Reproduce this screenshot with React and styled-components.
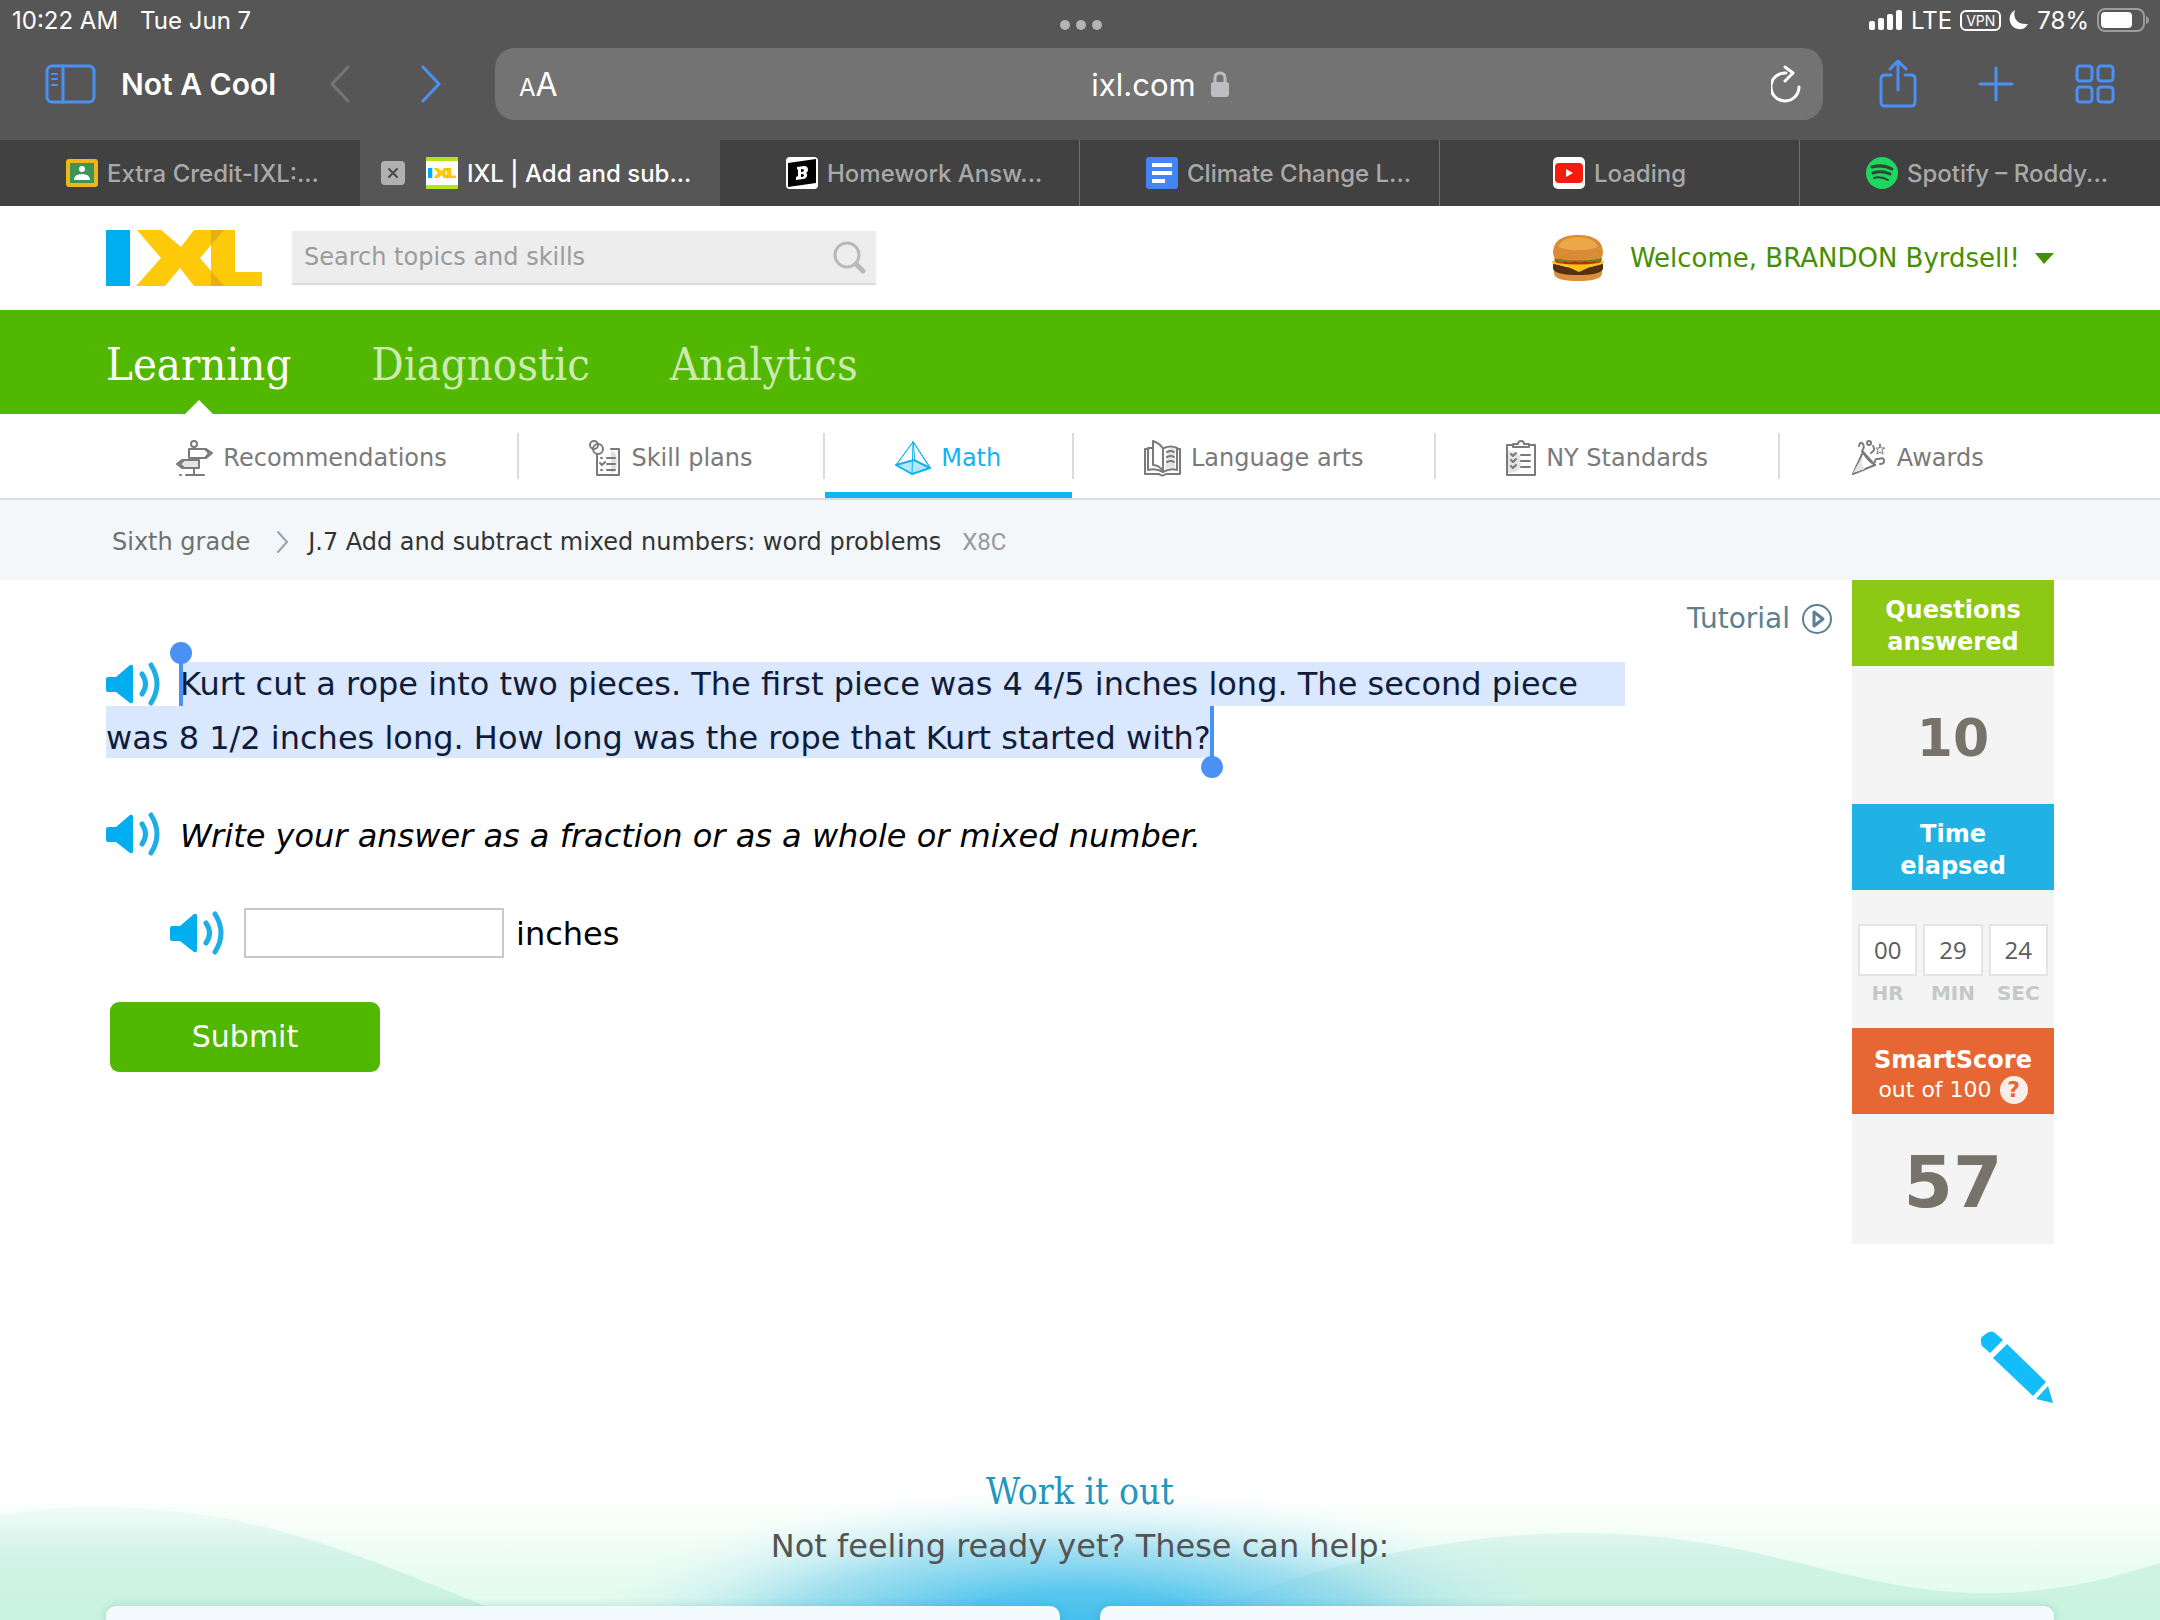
import React, { useState } from "react";
import styled, { createGlobalStyle } from "styled-components";

const GlobalStyle = createGlobalStyle`
  *, *::before, *::after {
    box-sizing: border-box;
  }
  body {
    margin: 0;
    background: #fff;
    font-family: "DejaVu Sans", Verdana, sans-serif;
    color: #000;
  }
  button, input {
    font: inherit;
    color: inherit;
  }
  button {
    border: none;
    background: none;
    padding: 0;
    cursor: pointer;
  }
  a {
    color: inherit;
    text-decoration: none;
  }
  svg {
    display: block;
    flex-shrink: 0;
  }
  h2, p, ul {
    margin: 0;
    padding: 0;
  }
`;

const Page = styled.div`
  display: flex;
  flex-direction: column;
  height: 100vh;
  overflow: hidden;
  > * {
    flex-shrink: 0;
  }
`;

/* browser */

const Browser = styled.header`
  background: #565656;
  color: #fff;
  font-family: Inter, sans-serif;
`;

const StatusBar = styled.div`
  display: grid;
  grid-template-columns: 1fr auto 1fr;
  align-items: center;
  height: 40px;
  padding: 0 10px 0 12px;
  font-size: 24px;
`;

const StatusGroup = styled.div`
  display: flex;
  align-items: center;
  gap: ${(props) => props.$gap}px;
  justify-content: ${(props) => (props.$end ? "flex-end" : "flex-start")};
`;

const Vpn = styled.span`
  border: 2px solid #fff;
  border-radius: 6px;
  padding: 0 4px;
  font-size: 14px;
  line-height: 17px;
`;

const Dots = styled.button`
  display: flex;
  gap: 6px;
  padding-top: 10px;
  span {
    width: 10px;
    height: 10px;
    border-radius: 50%;
    background: #b4b4b4;
  }
`;

const Toolbar = styled.div`
  display: flex;
  align-items: center;
  height: 100px;
  padding: 0 45px 12px;
`;

const ToolButtons = styled.div`
  display: flex;
  align-items: center;
  justify-content: space-between;
  color: #4a90f5;
  width: ${(props) => props.$width}px;
`;

const History = styled.div`
  display: flex;
  gap: 69px;
`;

const ProfileName = styled.button`
  margin: 0 auto 0 25px;
  color: #fff;
  font-size: 30px;
  font-weight: 600;
  white-space: nowrap;
`;

const AddressBar = styled.div`
  flex: 1;
  display: grid;
  grid-template-columns: 1fr auto 1fr;
  align-items: center;
  height: 72px;
  margin: 0 56px 0 53px;
  padding: 0 22px 0 24px;
  border-radius: 20px;
  background: #737373;
  font-size: 31px;
`;

const TextSize = styled.button`
  justify-self: start;
  font-size: 32px;
  small {
    font-size: 24px;
  }
`;

const Address = styled.div`
  display: flex;
  align-items: center;
  gap: 15px;
`;

const Reload = styled.button`
  justify-self: end;
`;

const TabBar = styled.nav`
  display: grid;
  grid-template-columns: repeat(6, 1fr);
  height: 66px;
  background: #414141;
  font-size: 24px;
  font-weight: 500;
`;

const Tab = styled.div`
  display: flex;
  align-items: center;
  justify-content: ${(props) => (props.$centered ? "center" : "flex-start")};
  padding-left: ${(props) => (props.$centered ? 0 : props.$active ? 21 : 66)}px;
  background: ${(props) => (props.$active ? "#565656" : "transparent")};
  color: ${(props) => (props.$active ? "#fff" : "#a9a9a9")};
  border-right: ${(props) => (props.$line ? "1px solid #707070" : "none")};
  a {
    display: flex;
    align-items: center;
    gap: 9px;
    white-space: nowrap;
  }
`;

const CloseTab = styled.button`
  margin-right: 21px;
`;

/* site header */

const SiteHeader = styled.div`
  display: flex;
  align-items: center;
  height: 104px;
  padding: 0 106px;
`;

const Search = styled.form`
  display: flex;
  align-items: center;
  width: 584px;
  height: 54px;
  margin-left: 30px;
  padding: 0 10px 0 12px;
  background: #ededed;
  border-bottom: 2px solid #dadada;
  input {
    flex: 1;
    min-width: 0;
    border: none;
    outline: none;
    background: none;
    padding: 0;
    font-size: 24px;
  }
  input::placeholder {
    color: #9b9b9b;
    opacity: 1;
  }
`;

const Account = styled.button`
  display: flex;
  align-items: center;
  gap: 15px;
  margin-left: auto;
  color: #468f00;
  font-size: 26px;
  svg:first-child {
    margin-right: 11px;
  }
`;

const MainNav = styled.nav`
  display: flex;
  align-items: center;
  gap: 80px;
  height: 104px;
  padding: 0 106px;
  background: #52b700;
`;

const MainLink = styled.a`
  position: relative;
  display: flex;
  align-items: center;
  height: 100%;
  padding-top: 4px;
  font-family: "Roboto Slab", "DejaVu Serif Condensed", "DejaVu Serif", serif;
  font-size: 45px;
  font-weight: 300;
  color: ${(props) => (props.$active ? "#fff" : "#cdebb0")};
  &::after {
    content: "";
    display: ${(props) => (props.$active ? "block" : "none")};
    position: absolute;
    bottom: 0;
    left: 50%;
    margin-left: -14px;
    border: 14px solid transparent;
    border-top: none;
    border-bottom-color: #fff;
  }
`;

const SubNav = styled.nav`
  display: flex;
  align-items: center;
  height: 86px;
  padding: 0 106px;
  border-bottom: 2px solid #dcdcdc;
`;

const SubLink = styled.a`
  flex: 1 0 auto;
  display: flex;
  align-items: center;
  justify-content: center;
  gap: 10px;
  height: 84px;
  padding-top: 10px;
  font-size: 24px;
  color: ${(props) => (props.$active ? "#0fb4f0" : "#7a7a7a")};
  border-bottom: 6px solid
    ${(props) => (props.$active ? "#0fb4f0" : "transparent")};
`;

const Divider = styled.span`
  width: 2px;
  height: 46px;
  background: #dcdcdc;
`;

const Breadcrumb = styled.nav`
  display: flex;
  align-items: center;
  height: 80px;
  padding: 4px 112px 0;
  background: #f3f7fa;
  font-size: 24px;
  color: #333;
  a {
    color: #707070;
  }
  svg {
    margin: 0 19px 0 26px;
  }
`;

const SkillCode = styled.span`
  margin-left: 21px;
  font-family: Roboto, sans-serif;
  color: #999;
`;

/* practice */

const Practice = styled.main`
  display: flex;
  align-items: flex-start;
  padding: 0 106px;
`;

const Question = styled.section`
  flex: 1;
  padding: 82px 62px 0 0;
  font-size: 32px;
  line-height: 44px;
`;

const Passage = styled.div`
  display: flex;
  flex-direction: column;
  align-items: flex-start;
  margin-bottom: 52px;
  color: #101c38;
  white-space: nowrap;
`;

const Line = styled.div`
  display: flex;
  align-items: center;
  gap: 20px;
  margin-left: ${(props) => (props.$indent ? 64 : 0)}px;
`;

const FirstLine = styled(Line)`
  align-self: stretch;
`;

const Highlight = styled.span`
  position: relative;
  flex: 1;
  background: #d9e7ff;
  line-height: ${(props) => (props.$last ? 40 : 44)}px;
  padding-top: ${(props) => (props.$last ? 12 : 0)}px;
`;

/* selection grips sit over the highlighted text */
const Grip = styled.i`
  position: absolute;
  top: 0;
  bottom: 0;
  width: 4px;
  background: #4a90f5;
  ${(props) => (props.$end ? "right: -3px;" : "left: -1px;")}
  &::after {
    content: "";
    position: absolute;
    left: -9px;
    ${(props) => (props.$end ? "bottom: -20px;" : "top: -20px;")}
    width: 22px;
    height: 22px;
    border-radius: 50%;
    background: #4a90f5;
  }
`;

const Instruction = styled.em`
  padding-top: 4px;
  font-style: italic;
`;

const AnswerForm = styled.form`
  margin-top: 50px;
`;

const AnswerInput = styled.input`
  width: 260px;
  height: 50px;
  border: 2px solid #c8c8c8;
  background: #fff;
  padding: 0 10px;
  outline: none;
`;

const Unit = styled.label`
  margin-left: -8px;
  padding-top: 2px;
`;

const Submit = styled.button`
  display: block;
  width: 270px;
  height: 70px;
  margin: 44px 0 0 4px;
  border-radius: 9px;
  background: #52b700;
  color: #fff;
  font-size: 30px;
`;

const Side = styled.aside`
  display: flex;
  align-items: flex-start;
  gap: 20px;
`;

const Tutorial = styled.a`
  display: flex;
  align-items: center;
  gap: 12px;
  margin-top: 22px;
  color: #5b8190;
  font-size: 28px;
`;

const Score = styled.div`
  width: 202px;
  background: #f4f4f4;
  text-align: center;
`;

const ScoreHead = styled.div`
  display: flex;
  flex-direction: column;
  align-items: center;
  justify-content: center;
  height: 86px;
  background: ${(props) => props.$color};
  color: #fff;
  font-size: 24px;
  font-weight: 700;
  line-height: 32px;
  padding-top: 6px;
`;

const OutOf = styled.span`
  display: flex;
  align-items: center;
  gap: 8px;
  height: 28px;
  font-size: 22px;
  font-weight: 400;
`;

const ScoreValue = styled.div`
  display: flex;
  align-items: center;
  justify-content: center;
  height: ${(props) => props.$height}px;
  padding-top: 6px;
  color: #77736a;
  font-size: ${(props) => props.$size}px;
  font-weight: 700;
`;

const Timer = styled.div`
  display: grid;
  grid-template-columns: repeat(3, 1fr);
  gap: 6px;
  height: 138px;
  padding: 34px 6px 0;
  color: #c3c9c5;
  font-size: 20px;
  font-weight: 700;
`;

const TimerBox = styled.div`
  height: 52px;
  margin-bottom: 5px;
  border: 2px solid #e4e4e4;
  background: #fff;
  color: #5c5c5c;
  font-family: "Open Sans", sans-serif;
  font-size: 24px;
  font-weight: 400;
  line-height: 47px;
`;

const PencilRow = styled.div`
  display: flex;
  justify-content: flex-end;
  padding: 87px 106px 0;
`;

/* help */

const Help = styled.section`
  position: relative;
  flex: 1 1 0;
  min-height: 0;
  margin-top: 15px;
  padding: 50px 106px 0;
  text-align: center;
`;

const HelpBackground = styled.svg`
  position: absolute;
  inset: 0;
  width: 100%;
  height: 100%;
  z-index: -1;
`;

const HelpTitle = styled.h2`
  font-family: "Roboto Slab", "DejaVu Serif Condensed", "DejaVu Serif", serif;
  font-size: 37px;
  font-weight: 400;
  line-height: 44px;
  color: #2496bd;
`;

const HelpText = styled.p`
  margin: 10px 0 38px;
  font-size: 32px;
  line-height: 44px;
  color: #545454;
`;

const Cards = styled.div`
  display: grid;
  grid-template-columns: 1fr 1fr;
  gap: 40px;
`;

const Card = styled.div`
  height: 200px;
  border-radius: 10px;
  background: #f3fbff;
  box-shadow: 0 0 8px rgba(40, 110, 130, 0.2);
`;

/* icons */

const Icon = ({ w, h, sw = 3, children, ...rest }) => (
  <svg
    width={w}
    height={h}
    viewBox={`0 0 ${w} ${h}`}
    fill="none"
    stroke="currentColor"
    strokeWidth={sw}
    strokeLinecap="round"
    strokeLinejoin="round"
    aria-hidden="true"
    {...rest}
  >
    {children}
  </svg>
);

const SignalIcon = () => (
  <Icon w={34} h={20} stroke="none" fill="#fff">
    <rect x="0" y="11" width="6" height="9" rx="2" />
    <rect x="9" y="8" width="6" height="12" rx="2" />
    <rect x="18" y="4" width="6" height="16" rx="2" />
    <rect x="27" y="0" width="6" height="20" rx="2" />
  </Icon>
);

const MoonIcon = () => (
  <Icon w={20} h={20} stroke="none" fill="#fff">
    <path d="M6 0C4 6 6 15 19 14C16 19 12 20 9 19C-1 17 -2 4 6 0Z" />
  </Icon>
);

const BatteryIcon = () => (
  <Icon w={53} h={24} stroke="none">
    <rect
      x="1"
      y="1"
      width="46"
      height="22"
      rx="7"
      stroke="#9c9c9c"
      strokeWidth="2"
    />
    <rect x="4" y="4" width="31" height="16" rx="4" fill="#fff" />
    <path d="M49 8Q52 9 52 12Q52 15 49 16Z" fill="#9c9c9c" />
  </Icon>
);

const SidebarIcon = () => (
  <Icon w={51} h={40}>
    <rect x="2" y="2" width="47" height="36" rx="5" />
    <path d="M18 2V38" />
    <path d="M7 10H12M7 15H12M7 21H12" strokeWidth="2" />
  </Icon>
);

const BackIcon = () => (
  <Icon w={22} h={38} stroke="#757575">
    <path d="M19 2L3 19L19 36" />
  </Icon>
);

const ForwardIcon = () => (
  <Icon w={22} h={38}>
    <path d="M3 2L19 19L3 36" />
  </Icon>
);

const LockIcon = () => (
  <Icon w={18} h={26} stroke="#bdbdc3">
    <rect x="0" y="11" width="18" height="15" rx="3" fill="#bdbdc3" stroke="none" />
    <path d="M4 12V7Q4 2 9 2Q14 2 14 7V12" />
  </Icon>
);

const ReloadIcon = () => (
  <Icon w={30} h={38}>
    <path d="M15 8A14 14 0 1 0 28 22" />
    <path d="M14 2L22 8L14 16" />
  </Icon>
);

const ShareIcon = () => (
  <Icon w={38} h={48}>
    <path d="M12 15H6Q2 15 2 19V42Q2 46 6 46H32Q36 46 36 42V19Q36 15 32 15H26" />
    <path d="M19 30V2M11 9L19 1L27 9" />
  </Icon>
);

const PlusIcon = () => (
  <Icon w={36} h={36}>
    <path d="M18 2V34M2 18H34" />
  </Icon>
);

const GridIcon = () => (
  <Icon w={40} h={40}>
    <rect x="2" y="2" width="15" height="15" rx="3" />
    <rect x="23" y="2" width="15" height="15" rx="3" />
    <rect x="2" y="23" width="15" height="15" rx="3" />
    <rect x="23" y="23" width="15" height="15" rx="3" />
  </Icon>
);

const CloseIcon = () => (
  <Icon w={24} h={24} stroke="#4a4a4a" sw={2}>
    <rect width="24" height="24" rx="4" fill="#b0b0b0" stroke="none" />
    <path d="M8 8L16 16M16 8L8 16" />
  </Icon>
);

const ClassroomIcon = () => (
  <Icon w={32} h={32} stroke="none">
    <rect y="2" width="32" height="28" rx="3" fill="#f0b41c" />
    <rect x="4" y="6" width="24" height="20" fill="#3d9456" />
    <circle cx="16" cy="12" r="3" fill="#fff" />
    <path d="M8 23Q8 17 16 17Q24 17 24 23Z" fill="#fff" />
  </Icon>
);

const LogoShapes = () => (
  <>
    <rect width="24" height="56" fill="#00aeef" />
    <path
      d="M31 0H55L75 17L88 0H118L94 28L118 56H88L74 38L59 56H30L55 28Z"
      fill="#fdc908"
    />
    <path d="M105 0H129V42H156V56H105Z" fill="#fdc908" />
    <path d="M105 0H118L105 15ZM105 41L118 56H105Z" fill="#e2b116" />
  </>
);

const IxlIcon = () => (
  <Icon w={32} h={32} stroke="none">
    <rect width="32" height="32" fill="#fff" />
    <path d="M0 0H32V4H0ZM0 28H32V32H0Z" fill="#b3e516" />
    <svg x="2" y="10" width="28" height="12" viewBox="0 0 156 56">
      <LogoShapes />
    </svg>
  </Icon>
);

const BrainlyIcon = () => (
  <Icon w={32} h={32} stroke="none">
    <rect width="32" height="32" rx="4" fill="#fff" />
    <path d="M2 6L30 2V26L2 30Z" fill="#000" />
    <path
      d="M11 10L18 9Q22 9 22 13Q22 15 20 16Q22 17 21 19Q20 22 17 22L10 23V20L12 19V13L11 12ZM15 12V15Q18 15 18 13Q18 12 15 12ZM15 17V20Q18 20 18 18Q18 17 15 17Z"
      fill="#fff"
      fillRule="evenodd"
    />
  </Icon>
);

const DocsIcon = () => (
  <Icon w={32} h={32} stroke="none">
    <rect width="32" height="32" rx="3" fill="#4285f4" />
    <path d="M6 6H26V10H6ZM6 14H26V18H6ZM6 22H19V26H6Z" fill="#fff" />
  </Icon>
);

const YoutubeIcon = () => (
  <Icon w={32} h={32} stroke="none">
    <rect width="32" height="32" rx="5" fill="#fff" />
    <rect x="2" y="6" width="28" height="20" rx="4" fill="#f61c0d" />
    <path d="M13 12L20 16L13 20Z" fill="#fff" />
  </Icon>
);

const SpotifyIcon = () => (
  <Icon w={32} h={32} stroke="#2f4636">
    <circle cx="16" cy="16" r="16" fill="#1ed760" stroke="none" />
    <path d="M6 10Q17 7 26 12" />
    <path d="M7 16Q16 13 24 17" strokeWidth="3" />
    <path d="M8 21Q15 19 22 23" strokeWidth="2" />
  </Icon>
);

const Logo = () => (
  <svg width="156" height="56" viewBox="0 0 156 56" role="img" aria-label="IXL">
    <LogoShapes />
  </svg>
);

const SearchIcon = () => (
  <Icon w={34} h={34} stroke="#b9b9b9">
    <circle cx="15" cy="15" r="12" />
    <path d="M24 24L31 31" strokeWidth="5" />
  </Icon>
);

const BurgerIcon = () => (
  <Icon w={52} h={48} stroke="none">
    <path
      d="M2 35Q14 41 26 41Q40 41 50 35V39Q50 47 26 47Q2 47 2 39Z"
      fill="#dc9036"
    />
    <path d="M1 29Q14 34 26 34Q40 34 51 29V35Q48 41 26 41Q4 41 1 35Z" fill="#55300f" />
    <path d="M0 27Q26 24 52 27L51 30L38 33L27 38L14 32L1 30Z" fill="#fdbf1a" />
    <path d="M3 23H49Q51 28 46 29Q26 32 6 29Q1 28 3 23Z" fill="#b52d17" />
    <path
      d="M4 25Q9 29 13 26Q18 29 23 26Q28 29 33 26Q38 29 42 26Q46 28 49 25"
      stroke="#5f8f24"
      strokeWidth="2"
    />
    <path d="M1 18Q2 1 26 1Q50 1 51 18Q51 25 46 25Q26 28 6 25Q1 25 1 18Z" fill="#d98c35" />
    <path d="M6 13Q10 3 26 3Q42 3 46 13Q36 17 26 16Q16 17 6 13Z" fill="#eba748" />
  </Icon>
);

const ArrowIcon = () => (
  <Icon w={19} h={11} stroke="none" fill="#468f00">
    <path d="M0 0H19L9 11Z" />
  </Icon>
);

const SignpostIcon = () => (
  <Icon w={37} h={36} sw={2}>
    <circle cx="18" cy="4" r="3" />
    <path d="M18 7V9M18 18V20M18 28V34M10 35H28M4 35H5" />
    <path d="M13 9H30L36 13L30 18H13Z" />
    <path d="M29 9L33 13L29 18" />
    <path d="M23 20H6L1 24L6 28H23Z" fill="#e4e4e4" />
    <path d="M8 20L4 24L8 28" />
  </Icon>
);

const PlansIcon = () => (
  <Icon w={32} h={36} sw={2}>
    <path d="M22 9H30V35H8V14" />
    <path d="M22 11Q28 11 28 22Q28 33 22 33Z" fill="#e0e0e0" stroke="none" />
    <circle cx="5" cy="5" r="4" />
    <circle cx="9" cy="9" r="5" />
    <path d="M18 18H26M18 24H26M18 30H26M12 18H13M11 23L13 25L16 22M12 30H13" />
  </Icon>
);

const PyramidIcon = () => (
  <Icon w={36} h={36} sw={2}>
    <path d="M1 25L19 20L35 28L17 34Z" fill="#b4e7fa" />
    <path d="M18 2L1 25M18 2L35 28M18 2L17 34" strokeWidth="1" />
    <path d="M18 2L1 25L17 34L35 28Z" strokeWidth="1" />
    <path d="M18 2L20 20" strokeWidth="1" />
  </Icon>
);

const BookIcon = () => (
  <Icon w={37} h={37} sw={2}>
    <path d="M20 8Q27 5 33 8V30Q26 28 19 32Q12 28 4 30V8H8" />
    <path d="M9 1V25Q16 25 19 32V9Q17 4 9 1Z" fill="#fff" />
    <path d="M24 9Q30 7 31 9V28Q26 27 21 29Z" fill="#e4e4e4" stroke="none" />
    <path d="M4 9H1V34H15Q18 37 22 34H36V9H33" />
    <path d="M23 12Q27 10 30 12M23 17Q27 15 30 17M23 22Q27 20 30 22" />
  </Icon>
);

const ClipboardIcon = () => (
  <Icon w={30} h={36} sw={2}>
    <path d="M7 5H1V35H29V5H23" />
    <path d="M2 11Q15 11 15 22Q15 33 2 33Z" fill="#e4e4e4" stroke="none" />
    <path d="M7 7V4H12Q12 1 15 1Q18 1 18 4H23V7Z" />
    <path d="M15 15H24M15 21H24M15 27H24" />
    <path d="M5 14L7 16L10 13M5 20L7 22L10 19M5 26L7 28L10 25" />
  </Icon>
);

const PartyIcon = () => (
  <Icon w={36} h={36} sw={2}>
    <path d="M12 12L24 25L2 34Z" />
    <path d="M11 17L2 33L14 29Q10 25 11 17Z" fill="#e4e4e4" stroke="none" />
    <path d="M12 12Q16 20 24 25" />
    <path d="M8 6Q9 1 12 4Q14 7 11 11" />
    <circle cx="18" cy="3" r="2" />
    <path d="M20 13Q25 10 22 6" />
    <path d="M29 4L30 8L34 8L31 10L32 14L29 12L26 14L27 10L25 8H28Z" strokeWidth="1" />
    <path d="M24 22Q24 18 28 19Q33 17 33 21Q33 24 29 24" />
  </Icon>
);

const SpeakerIcon = () => (
  <Icon w={54} h={44} stroke="#1eaee5">
    <path
      d="M2 15H10L24 3Q27 2 27 5V39Q27 42 24 41L10 30H2Q0 30 0 27V18Q0 15 2 15Z"
      fill="#00aeef"
      stroke="none"
    />
    <path d="M36 12Q43 22 36 32" strokeWidth="5" />
    <path d="M45 3Q57 22 45 41" strokeWidth="5" />
  </Icon>
);

const PlayIcon = () => (
  <Icon w={30} h={30} sw={2}>
    <circle cx="15" cy="15" r="14" />
    <path d="M12 8L21 15L12 22Z" strokeWidth="3" />
  </Icon>
);

const HelpBadge = styled.button`
  width: 28px;
  height: 28px;
  border-radius: 50%;
  background: #fbeeea;
  color: #e66733;
  font-size: 22px;
  font-weight: 700;
  line-height: 28px;
`;

const PencilIcon = () => (
  <Icon w={74} h={74} stroke="none" fill="#12bdfa">
    <path d="M1 10Q0 7 3 5L7 2Q12 -1 15 2L23 9L10 22L2 15Q1 13 1 10Z" />
    <path d="M27 13L66 51L53 65L13 27Z" />
    <path d="M68 55L73 72L56 68Z" />
  </Icon>
);

const tabs = [
  { title: "Extra Credit-IXL:...", icon: <ClassroomIcon /> },
  { title: "IXL | Add and sub...", icon: <IxlIcon />, active: true },
  { title: "Homework Answ...", icon: <BrainlyIcon />, line: true },
  { title: "Climate Change L...", icon: <DocsIcon />, line: true },
  { title: "Loading", icon: <YoutubeIcon />, line: true, centered: true },
  { title: "Spotify – Roddy...", icon: <SpotifyIcon /> },
];

const subjects = [
  { name: "Recommendations", icon: <SignpostIcon /> },
  { name: "Skill plans", icon: <PlansIcon /> },
  { name: "Math", icon: <PyramidIcon />, active: true },
  { name: "Language arts", icon: <BookIcon /> },
  { name: "NY Standards", icon: <ClipboardIcon /> },
  { name: "Awards", icon: <PartyIcon /> },
];

const time = [
  { value: "00", unit: "HR" },
  { value: "29", unit: "MIN" },
  { value: "24", unit: "SEC" },
];

function BrowserChrome() {
  return (
    <Browser>
      <StatusBar>
        <StatusGroup $gap={22}>
          <span>10:22 AM</span>
          <span>Tue Jun 7</span>
        </StatusGroup>
        <Dots aria-label="Multitasking">
          <span />
          <span />
          <span />
        </Dots>
        <StatusGroup $gap={8} $end>
          <SignalIcon />
          <span>LTE</span>
          <Vpn>VPN</Vpn>
          <MoonIcon />
          <span>78%</span>
          <BatteryIcon />
        </StatusGroup>
      </StatusBar>
      <Toolbar>
        <ToolButtons $width={397}>
          <button aria-label="Sidebar">
            <SidebarIcon />
          </button>
          <ProfileName>Not A Cool</ProfileName>
          <History>
            <button aria-label="Back">
              <BackIcon />
            </button>
            <button aria-label="Forward">
              <ForwardIcon />
            </button>
          </History>
        </ToolButtons>
        <AddressBar>
          <TextSize aria-label="Page settings">
            <small>A</small>A
          </TextSize>
          <Address>
            ixl.com <LockIcon />
          </Address>
          <Reload aria-label="Reload">
            <ReloadIcon />
          </Reload>
        </AddressBar>
        <ToolButtons $width={236}>
          <button aria-label="Share">
            <ShareIcon />
          </button>
          <button aria-label="New tab">
            <PlusIcon />
          </button>
          <button aria-label="Tab overview">
            <GridIcon />
          </button>
        </ToolButtons>
      </Toolbar>
      <TabBar>
        {tabs.map((tab) => (
          <Tab
            key={tab.title}
            $active={tab.active}
            $line={tab.line}
            $centered={tab.centered}
          >
            {tab.active && (
              <CloseTab aria-label="Close tab">
                <CloseIcon />
              </CloseTab>
            )}
            <a href="#tab">
              {tab.icon}
              {tab.title}
            </a>
          </Tab>
        ))}
      </TabBar>
    </Browser>
  );
}

function Header() {
  return (
    <>
      <SiteHeader>
        <a href="#home">
          <Logo />
        </a>
        <Search>
          <input
            type="text"
            placeholder="Search topics and skills"
            aria-label="Search topics and skills"
          />
          <button type="button" aria-label="Search">
            <SearchIcon />
          </button>
        </Search>
        <Account>
          <BurgerIcon />
          Welcome, BRANDON Byrdsell!
          <ArrowIcon />
        </Account>
      </SiteHeader>
      <MainNav>
        <MainLink href="#learning" $active>
          Learning
        </MainLink>
        <MainLink href="#diagnostic">Diagnostic</MainLink>
        <MainLink href="#analytics">Analytics</MainLink>
      </MainNav>
      <SubNav>
        {subjects.map((subject, i) => (
          <React.Fragment key={subject.name}>
            {i > 0 && <Divider />}
            <SubLink href="#subject" $active={subject.active}>
              {subject.icon}
              {subject.name}
            </SubLink>
          </React.Fragment>
        ))}
      </SubNav>
      <Breadcrumb>
        <a href="#sixth-grade">Sixth grade</a>
        <Icon w={13} h={22} sw={2} stroke="#9aa3a8">
          <path d="M2 1L11 11L2 21" />
        </Icon>
        <span>J.7 Add and subtract mixed numbers: word problems</span>
        <SkillCode>X8C</SkillCode>
      </Breadcrumb>
    </>
  );
}

function ReadAloud() {
  return (
    <button type="button" aria-label="Read aloud">
      <SpeakerIcon />
    </button>
  );
}

function QuestionPanel() {
  const [answer, setAnswer] = useState("");

  return (
    <Question>
      <Passage>
        <FirstLine>
          <ReadAloud />
          <Highlight>
            <Grip />
            Kurt cut a rope into two pieces. The first piece was 4 4/5 inches
            long. The second piece
          </Highlight>
        </FirstLine>
        <Highlight $last>
          was 8 1/2 inches long. How long was the rope that Kurt started with?
          <Grip $end />
        </Highlight>
      </Passage>
      <Line>
        <ReadAloud />
        <Instruction>
          Write your answer as a fraction or as a whole or mixed number.
        </Instruction>
      </Line>
      <AnswerForm onSubmit={(e) => e.preventDefault()}>
        <Line $indent>
          <ReadAloud />
          <AnswerInput
            id="answer"
            type="text"
            value={answer}
            onChange={(e) => setAnswer(e.target.value)}
          />
          <Unit htmlFor="answer">inches</Unit>
        </Line>
        <Submit type="submit">Submit</Submit>
      </AnswerForm>
    </Question>
  );
}

function ScorePanel() {
  return (
    <Side>
      <Tutorial href="#tutorial">
        Tutorial <PlayIcon />
      </Tutorial>
      <Score>
        <ScoreHead $color="#8cc814">
          <span>Questions</span>
          <span>answered</span>
        </ScoreHead>
        <ScoreValue $height={138} $size={52}>
          10
        </ScoreValue>
        <ScoreHead $color="#20b2e5">
          <span>Time</span>
          <span>elapsed</span>
        </ScoreHead>
        <Timer>
          {time.map((part) => (
            <div key={part.unit}>
              <TimerBox>{part.value}</TimerBox>
              {part.unit}
            </div>
          ))}
        </Timer>
        <ScoreHead $color="#e66733">
          <span>SmartScore</span>
          <OutOf>
            out of 100 <HelpBadge aria-label="About SmartScore">?</HelpBadge>
          </OutOf>
        </ScoreHead>
        <ScoreValue $height={130} $size={71}>
          57
        </ScoreValue>
      </Score>
    </Side>
  );
}

function HelpPanel() {
  return (
    <Help>
      <HelpBackground viewBox="0 0 2160 200" preserveAspectRatio="none">
        <defs>
          <linearGradient id="mist" x1="0" y1="0" x2="0" y2="1">
            <stop offset="0.35" stopColor="#dcfbe9" stopOpacity="0" />
            <stop offset="1" stopColor="#dcfbe9" />
          </linearGradient>
          <linearGradient
            id="hill"
            gradientUnits="userSpaceOnUse"
            x1="0"
            y1="75"
            x2="0"
            y2="190"
          >
            <stop offset="0" stopColor="#c9efe4" stopOpacity="0" />
            <stop offset="0.5" stopColor="#c9efe4" stopOpacity="0.7" />
            <stop offset="1" stopColor="#c9f3e0" />
          </linearGradient>
          <radialGradient
            id="glow"
            gradientUnits="userSpaceOnUse"
            cx="0"
            cy="0"
            r="1"
            gradientTransform="translate(1080 215) scale(500 145)"
          >
            <stop offset="0" stopColor="#3dbcec" />
            <stop offset="0.3" stopColor="#4fc4ee" stopOpacity="0.95" />
            <stop offset="0.6" stopColor="#7dd0f0" stopOpacity="0.65" />
            <stop offset="0.8" stopColor="#a8dff5" stopOpacity="0.3" />
            <stop offset="1" stopColor="#d5effa" stopOpacity="0" />
          </radialGradient>
        </defs>
        <rect width="2160" height="200" fill="url(#mist)" />
        <path
          d="M0 95C60 84 130 84 206 95C310 112 400 152 500 192L520 200H0Z"
          fill="url(#hill)"
        />
        <path
          d="M1180 200C1300 150 1440 113 1580 113C1760 113 1850 173 1985 173C2060 173 2110 158 2160 143V200Z"
          fill="url(#hill)"
        />
        <rect width="2160" height="200" fill="url(#glow)" />
      </HelpBackground>
      <HelpTitle>Work it out</HelpTitle>
      <HelpText>Not feeling ready yet? These can help:</HelpText>
      <Cards>
        <Card />
        <Card />
      </Cards>
    </Help>
  );
}

export default function App() {
  return (
    <Page>
      <GlobalStyle />
      <BrowserChrome />
      <Header />
      <Practice>
        <QuestionPanel />
        <ScorePanel />
      </Practice>
      <PencilRow>
        <button aria-label="Scratchpad">
          <PencilIcon />
        </button>
      </PencilRow>
      <HelpPanel />
    </Page>
  );
}
